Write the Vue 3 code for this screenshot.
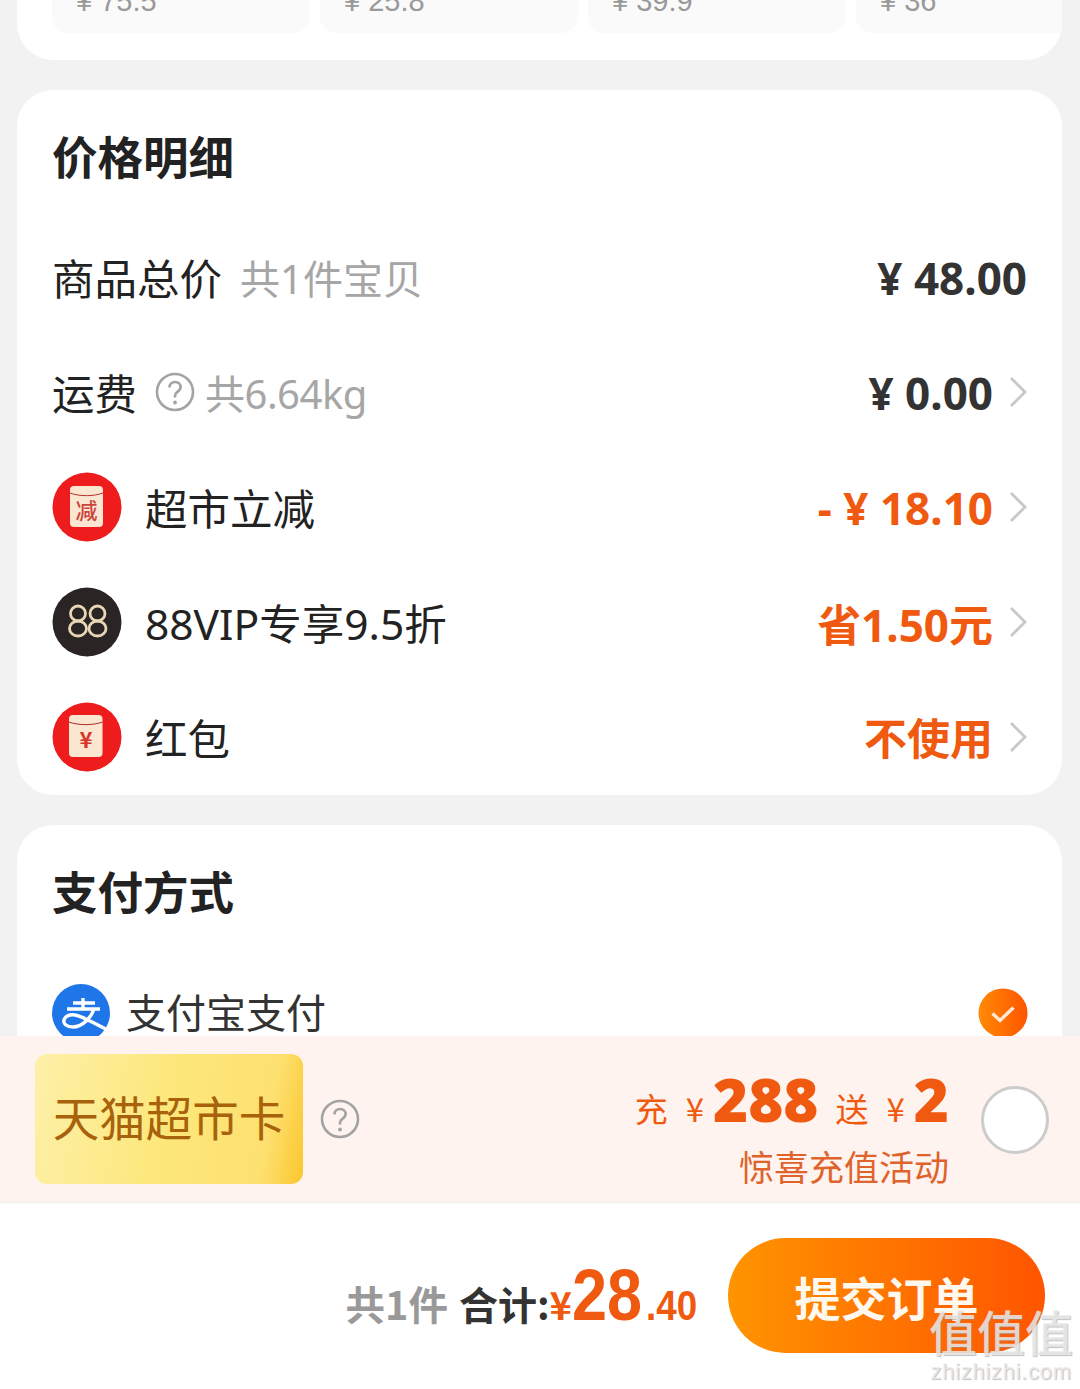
<script setup>
const tiles = ['¥ 75.5', '¥ 25.8', '¥ 39.9', '¥ 36']
</script>

<template>
  <div class="page">
    <section class="top-card">
      <div class="tiles">
        <div v-for="t in tiles" :key="t" class="tile"><span>{{ t }}</span></div>
      </div>
    </section>

    <section class="card price">
      <h2 class="title">价格明细</h2>
      <div class="row">
        <div class="left"><span class="name">商品总价</span><span class="muted first">共1件宝贝</span></div>
        <div class="right"><b class="amount dark">¥ 48.00</b></div>
      </div>
      <div class="row">
        <div class="left">
          <span class="name">运费</span>
          <svg class="help" viewBox="0 0 40 40"><circle cx="20" cy="20" r="18" fill="none" stroke="#a3a3a3" stroke-width="2.6"/><path d="M14.5 15.5c0-3.3 2.4-5.5 5.6-5.5 3.2 0 5.500 2.100 5.500 5 0 2.200-1.200 3.400-2.900 4.600-1.700 1.200-2.700 2.200-2.700 4.400v1.500" fill="none" stroke="#a3a3a3" stroke-width="2.600"/><circle cx="20" cy="30.500" r="1.900" fill="#a3a3a3"/></svg>
          <span class="muted tight">共6.64kg</span>
        </div>
        <div class="right"><b class="amount dark">¥ 0.00</b><svg class="chev" viewBox="0 0 18 32"><path d="M2 2l14 14L2 30" fill="none" stroke="#c8c8c8" stroke-width="2.800"/></svg></div>
      </div>
      <div class="row">
        <div class="left">
          <svg class="badge" viewBox="0 0 70 70">
            <circle cx="35" cy="35" r="34.500" fill="#ee1c1c"/>
            <rect x="18" y="14" width="33" height="41" rx="4" fill="#fbe6d2"/>
            <path d="M18 21c9 3.500 24 3.500 33 0" fill="none" stroke="#b8302a" stroke-width="1"/>
            <text x="34.500" y="46.500" text-anchor="middle" class="badge-text red-text">减</text>
          </svg>
          <span class="name icon-gap">超市立减</span>
        </div>
        <div class="right"><b class="amount orange">- ¥ 18.10</b><svg class="chev" viewBox="0 0 18 32"><path d="M2 2l14 14L2 30" fill="none" stroke="#c8c8c8" stroke-width="2.800"/></svg></div>
      </div>
      <div class="row">
        <div class="left">
          <svg class="badge" viewBox="0 0 70 70">
            <circle cx="35" cy="35" r="34.500" fill="#2a2424"/>
            <g fill="none" stroke="#e8d6b4" stroke-width="2.800">
              <ellipse cx="26" cy="26.500" rx="7.500" ry="7.500"/><ellipse cx="26" cy="41.500" rx="8.500" ry="7.500"/>
              <ellipse cx="45.500" cy="26.500" rx="7.500" ry="7.500"/><ellipse cx="45.500" cy="41.500" rx="8.500" ry="7.500"/>
            </g>
          </svg>
          <span class="name icon-gap">88VIP专享9.5折</span>
        </div>
        <div class="right"><b class="amount orange">省1.50元</b><svg class="chev" viewBox="0 0 18 32"><path d="M2 2l14 14L2 30" fill="none" stroke="#c8c8c8" stroke-width="2.800"/></svg></div>
      </div>
      <div class="row">
        <div class="left">
          <svg class="badge" viewBox="0 0 70 70">
            <circle cx="35" cy="35" r="34.500" fill="#ee1c1c"/>
            <rect x="17" y="13" width="33.500" height="42" rx="4" fill="#fbe6d2"/>
            <path d="M17 20c9 3.500 24.500 3.500 33.500 0" fill="none" stroke="#a82a26" stroke-width="1"/>
            <text x="34" y="46" text-anchor="middle" class="badge-text yen-text">¥</text>
          </svg>
          <span class="name icon-gap">红包</span>
        </div>
        <div class="right"><b class="amount orange cjk">不使用</b><svg class="chev" viewBox="0 0 18 32"><path d="M2 2l14 14L2 30" fill="none" stroke="#c8c8c8" stroke-width="2.800"/></svg></div>
      </div>
    </section>

    <section class="card pay">
      <h2 class="title">支付方式</h2>
      <div class="pay-row">
        <div class="left">
          <svg class="ali" viewBox="0 0 58 58">
            <circle cx="29" cy="29" r="29" fill="#1f76e8"/>
            <path d="M21 19h22M31 14v11M15 25h33M42 25C39 34 30 43 21 43 15 43 11 40 12 36 13 32 18 30 23 31 31 32 44 41 58 47" fill="none" stroke="#fff" stroke-width="3.400"/>
          </svg>
          <span class="pay-name">支付宝支付</span>
        </div>
        <svg class="check" viewBox="0 0 50 50">
          <defs><linearGradient id="chk" x1="0" x2="1" y1="0" y2="0"><stop offset="0" stop-color="#ff8a05"/><stop offset="1" stop-color="#ff5500"/></linearGradient></defs>
          <circle cx="25" cy="25" r="24.500" fill="url(#chk)"/>
          <path d="M14.500 25.500l7.500 7 13.500-13" fill="none" stroke="#ffe9d6" stroke-width="3.400"/>
        </svg>
      </div>
    </section>

    <section class="recharge">
      <div class="recharge-left">
        <div class="gold"><span>天猫超市卡</span></div>
        <svg class="help help-gold" viewBox="0 0 40 40"><circle cx="20" cy="20" r="18" fill="none" stroke="#a3a3a3" stroke-width="2.600"/><path d="M14.500 15.500c0-3.300 2.400-5.500 5.600-5.500 3.200 0 5.500 2.100 5.500 5 0 2.200-1.200 3.400-2.900 4.600-1.700 1.200-2.700 2.200-2.700 4.400v1.500" fill="none" stroke="#a3a3a3" stroke-width="2.600"/><circle cx="20" cy="30.500" r="1.900" fill="#a3a3a3"/></svg>
      </div>
      <div class="recharge-right">
        <div class="offer">
          <div class="offer-line">
            <span class="small">充</span><span class="small yen">¥</span><b class="big">288</b>
            <span class="small gift">送</span><span class="small yen">¥</span><b class="big">2</b>
          </div>
          <div class="offer-note">惊喜充值活动</div>
        </div>
        <span class="radio"></span>
      </div>
    </section>

    <footer class="footer">
      <div class="sum">
        <b class="count">共1件</b>
        <b class="total">合计:</b>
        <b class="sum-yen">¥</b><b class="sum-int"><i>28</i></b><b class="sum-dec"><i>.40</i></b>
      </div>
      <button class="submit">提交订单</button>
    </footer>

    <div class="watermark">
      <span class="wm-big">值值值</span>
      <span class="wm-small">zhizhizhi.com</span>
    </div>
  </div>
</template>

<style scoped>
.page {
  position: relative;
  width: 1080px;
  height: 1389px;
  overflow: hidden;
  background: #f2f2f2;
  font-family: "Noto Sans", "Noto Sans CJK SC", sans-serif;
  color: #333;
}
.top-card {
  height: 60px;
  margin: 0 18px 30px 17px;
  padding-left: 35px;
  background: #fff;
  border-radius: 0 0 36px 36px;
  overflow: hidden;
}
.tiles { display: flex; gap: 10px; }
.tile {
  flex: 0 0 258px;
  box-sizing: border-box;
  height: 33px;
  padding-left: 24px;
  background: #fafafa;
  border-radius: 0 0 16px 16px;
  overflow: hidden;
}
.tile span {
  display: block;
  margin-top: -13px;
  font: 29px/28px "Liberation Sans", sans-serif;
  color: #999;
}
.card {
  margin: 0 18px 30px 17px;
  background: #fff;
  border-radius: 36px;
}
.price { height: 705px; padding: 0 35px; box-sizing: border-box; overflow: hidden; }
.title {
  margin: 0;
  height: 129px;
  line-height: 131px;
  font-family: "Noto Sans CJK SC", sans-serif;
  font-size: 45.500px;
  font-weight: 700;
  color: #222;
}
.row {
  height: 115px;
  display: flex;
  align-items: center;
  justify-content: space-between;
}
.left { display: flex; align-items: center; }
.right { display: flex; align-items: center; }
.name { font-size: 42.500px; color: #222; }
.muted { font-size: 40px; color: #a6a6a6; }
.tight { letter-spacing: -.5px; }
.first { margin-left: 18px; }
.help { width: 40px; height: 40px; margin: 0 10px 0 18px; }
.help-gold { margin-left: 17px; }
.badge { width: 70px; height: 70px; }
.badge-text { font-family: "Noto Sans CJK SC", sans-serif; }
.red-text { font-size: 22px; font-weight: 500; fill: #c9453a; }
.yen-text { font-size: 22px; font-weight: 700; fill: #d8352a; }
.icon-gap { margin-left: 23px; }
.amount { padding-top: 3px; font-size: 44px; font-weight: 700; }
.cjk { font-size: 43px; padding-top: 0; }
.dark { color: #333; }
.orange { color: #f05a10; }
.chev { width: 18px; height: 32px; margin-left: 16px; }
.pay {
  height: 211px;
  margin-bottom: 0;
  padding: 0 34px 0 35px;
  box-sizing: border-box;
  border-radius: 36px 36px 0 0;
  overflow: hidden;
}
.pay-row { display: flex; justify-content: space-between; align-items: center; height: 58px; margin-top: 30px; }
.ali { width: 58px; height: 58px; }
.pay-name { margin: 0 0 5px 16px; font-size: 40px; color: #333; font-family: "Noto Sans CJK SC", sans-serif; }
.check { width: 50px; height: 50px; }
.recharge {
  height: 167px;
  box-sizing: border-box;
  padding: 0 31px 0 35px;
  background: #fef3ef;
  display: flex;
  align-items: center;
  justify-content: space-between;
  border-bottom: 1px solid #eee;
}
.recharge-left { display: flex; align-items: center; }
.gold {
  box-sizing: border-box;
  width: 268px;
  height: 130px;
  padding-bottom: 8px;
  border-radius: 12px;
  background: linear-gradient(100deg, #fdf0a8 0%, #fde77a 50%, #fde070 85%, #fbc62c 100%);
  display: flex;
  align-items: center;
  justify-content: center;
}
.gold span { font-size: 46.500px; color: #a8620c; font-family: "Noto Sans CJK SC", sans-serif; }
.recharge-right { display: flex; align-items: center; }
.offer { text-align: right; color: #f05a10; padding-top: 20px; }
.offer-line { display: flex; align-items: baseline; justify-content: flex-end; height: 64px; margin-bottom: 10px; }
.small { font-size: 33px; font-family: "Noto Sans CJK SC", sans-serif; }
.yen { margin-left: 18px; margin-right: 9px; }
.gift { margin-left: 17px; }
.big { font-size: 60px; line-height: 64px; font-weight: 900; }
.offer-note { font-size: 35px; line-height: 50px; color: #e0632c; font-family: "Noto Sans CJK SC", sans-serif; }
.radio {
  width: 62px;
  height: 62px;
  margin: 2px 0 0 32px;
  border-radius: 50%;
  border: 3.500px solid #cccccc;
  background: #fff;
}
.footer {
  height: 186px;
  box-sizing: border-box;
  padding: 35px 35px 0 0;
  background: #fff;
  display: flex;
  justify-content: flex-end;
  align-items: flex-start;
}
.sum { display: flex; align-items: baseline; height: 115px; padding-top: 16px; box-sizing: border-box; font-family: "Noto Sans CJK SC", sans-serif; }
.count { font-size: 39.500px; color: #999; }
.total { margin-left: 11px; font-size: 39px; color: #333; }
.sum-yen { font-size: 38px; color: #f05a10; }
.sum-int, .sum-dec { display: inline-block; color: #f05a10; font-family: "Liberation Sans", sans-serif; }
.sum-int i, .sum-dec i { display: inline-block; font-style: normal; transform-origin: left bottom; transform: scaleX(.875); }
.sum-int { width: 72px; font-size: 72px; }
.sum-dec { width: 52px; font-size: 42px; margin-left: 2px; }
.submit {
  width: 317px;
  height: 115px;
  margin-left: 30px;
  border: 0;
  border-radius: 58px;
  background: linear-gradient(90deg, #ff9400, #ff5500);
  color: #fff8ee;
  font: 700 46px "Noto Sans CJK SC", sans-serif;
}
.watermark {
  position: absolute;
  left: 928px;
  top: 1300px;
  width: 146px;
  display: flex;
  flex-direction: column;
  align-items: center;
  color: rgba(236,236,236,.82);
  text-shadow: 1px 1px 1px rgba(140,140,140,.55);
  font-family: "Noto Sans CJK SC", sans-serif;
}
.wm-big { font-size: 48px; line-height: 60px; font-weight: 500; white-space: nowrap; }
.wm-small { font: 22px/24px "Liberation Sans", sans-serif; letter-spacing: .7px; white-space: nowrap; }
</style>
